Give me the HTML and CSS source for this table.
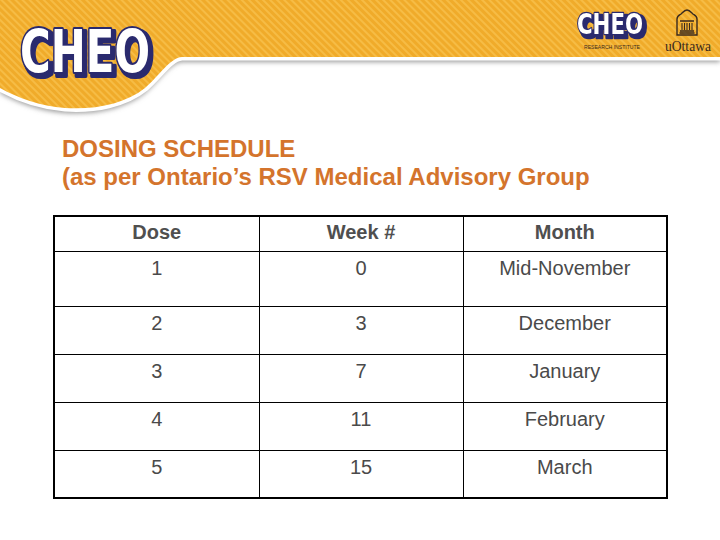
FILE: index.html
```html
<!DOCTYPE html>
<html lang="en">
<head>
<meta charset="utf-8">
<title>Dosing Schedule</title>
<link rel="stylesheet" href="styles.css">
</head>
<body>
<header class="banner">
  <svg class="banner-art" width="720" height="122" viewBox="0 0 720 122" xmlns="http://www.w3.org/2000/svg">
    <defs>
      <pattern id="stripes" width="5" height="5" patternUnits="userSpaceOnUse" patternTransform="rotate(-45)">
        <rect width="5" height="5" fill="#f0ab2a"/>
        <rect width="2" height="5" fill="#f6bc45"/>
      </pattern>
      <filter id="blur" x="-10%" y="-20%" width="120%" height="160%">
        <feGaussianBlur stdDeviation="2.5"/>
      </filter>
      <filter id="depth" x="-10%" y="-20%" width="130%" height="150%">
        <feMorphology in="SourceAlpha" operator="dilate" radius="1" result="grown"/>
        <feOffset in="grown" dx="3" dy="3" result="off"/>
        <feFlood flood-color="#2b2a6e"/>
        <feComposite in2="off" operator="in" result="shadow"/>
        <feMerge>
          <feMergeNode in="shadow"/>
          <feMergeNode in="SourceGraphic"/>
        </feMerge>
      </filter>
    </defs>
    <path d="M0,0 H720 V57 H182 C170,58 160,75 145,88 C125,104 95,110 65,108 C40,106 18,98 0,88 Z" transform="translate(0,5)" fill="#9a9a9a" filter="url(#blur)"/>
    <path d="M0,0 H720 V57 H182 C170,58 160,75 145,88 C125,104 95,110 65,108 C40,106 18,98 0,88 Z" fill="#ffffff" stroke="#ffffff" stroke-width="7"/>
    <path d="M0,0 H720 V57 H182 C170,58 160,75 145,88 C125,104 95,110 65,108 C40,106 18,98 0,88 Z" fill="url(#stripes)"/>
    <!-- big CHEO logo -->
    <text x="20" y="72" class="logo-main" filter="url(#depth)" textLength="130" lengthAdjust="spacingAndGlyphs">CHEO</text>
    <!-- small CHEO research logo -->
    <text x="577" y="34" class="logo-main small" filter="url(#depth)" textLength="66" lengthAdjust="spacingAndGlyphs">CHEO</text>
    <text x="584" y="49" class="ri" textLength="56" lengthAdjust="spacingAndGlyphs">RESEARCH INSTITUTE</text>
    <!-- uOttawa -->
    <g fill="none" stroke="#3a2a1e" stroke-width="1.4">
      <path d="M677,35 V19 C677,15 681,15 682,13 C684,11 686,10 687,10 C688,10 690,11 692,13 C693,15 697,15 697,19 V35 Z"/>
      <path d="M680,21 H694 M680,31 H694 M679.5,33 H694.5"/>
      <path d="M682,23 V30 M684.5,23 V30 M687,23 V30 M689.5,23 V30 M692,23 V30" stroke-width="1.1"/>
    </g>
    <text x="665" y="51" class="uo" textLength="46" lengthAdjust="spacingAndGlyphs">uOttawa</text>
  </svg>
</header>
<main class="content">
  <h1 class="title">DOSING SCHEDULE<br>(as per Ontario’s RSV Medical Advisory Group</h1>
  <table class="schedule">
    <colgroup>
      <col class="c1"><col class="c2"><col class="c3">
    </colgroup>
    <thead>
      <tr class="row-head"><th>Dose</th><th>Week #</th><th>Month</th></tr>
    </thead>
    <tbody>
      <tr class="row-first"><td>1</td><td>0</td><td>Mid-November</td></tr>
      <tr class="row"><td>2</td><td>3</td><td>December</td></tr>
      <tr class="row"><td>3</td><td>7</td><td>January</td></tr>
      <tr class="row"><td>4</td><td>11</td><td>February</td></tr>
      <tr class="row"><td>5</td><td>15</td><td>March</td></tr>
    </tbody>
  </table>
</main>
</body>
</html>
```

FILE: styles.css
```css
html, body {
  margin: 0;
  padding: 0;
  background: #ffffff;
}
body {
  width: 720px;
  height: 540px;
  overflow: hidden;
  font-family: "Liberation Sans", Arial, sans-serif;
}
.banner {
  height: 122px;
}
.banner-art {
  display: block;
}
.logo-main {
  font-family: "DejaVu Sans", sans-serif;
  font-weight: bold;
  font-size: 58px;
  fill: #ffffff;
  stroke: #2b2a6e;
  stroke-width: 4;
  paint-order: stroke;
  stroke-linejoin: round;
}
.logo-main.small {
  font-size: 28px;
  stroke-width: 2.5;
}
.ri {
  font-family: "Liberation Sans", sans-serif;
  font-size: 6px;
  fill: #3a2a1e;
}
.uo {
  font-family: "Liberation Serif", serif;
  font-size: 15px;
  fill: #3a2a1e;
}
.content {
  padding: 0;
}
.title {
  margin: 13px 0 0 62px;
  font-size: 24px;
  line-height: 28px;
  font-weight: bold;
  color: #d4742c;
}
.schedule {
  margin: 24px 0 0 53px;
  width: 613px;
  border-collapse: collapse;
  border: 2px solid #000;
  table-layout: fixed;
  font-size: 20px;
  line-height: 24px;
  color: #4a4a4a;
}
.c1 { width: 205px; }
.c2 { width: 204px; }
.c3 { width: 204px; }
.schedule th, .schedule td {
  border: 1px solid #000;
  text-align: center;
  vertical-align: top;
  padding: 4px 0 0;
}
.schedule th {
  font-weight: bold;
  color: #4f4f4f;
  padding-top: 3px;
}
.row-head { height: 35px; }
.row-first { height: 55px; }
.row { height: 48px; }
```
